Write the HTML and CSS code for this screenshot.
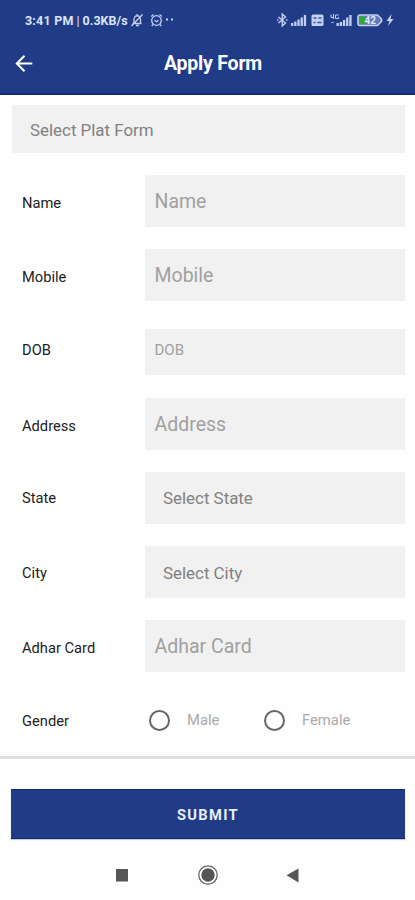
FILE: index.html
```html
<!DOCTYPE html>
<html lang="en">
<head>
<meta charset="utf-8">
<title>Apply Form</title>
<link rel="stylesheet" href="styles.css">
</head>
<body>
<header class="header">
  <div class="status">
    <span class="clock">3:41 PM</span><span class="bar">|</span><span class="speed">0.3KB/s</span>
    <svg class="status-left" width="48" height="16" viewBox="0 0 48 16" fill="none" stroke="#c3d0f2" stroke-width="1.3">
      <path d="M3.5 11.5h9M5 11V7.500a3.200 3.700 0 0 1 6.500 0V11M7 13.500h3M2.500 14 13.500 2.500M8.200 2v2"/>
      <circle cx="27.500" cy="8.500" r="4.800"/><path d="m22.200 4.500 2.300-2M32.800 4.500l-2.300-2M25.500 8.200l2 1.500 2-1.500M24 12.500l-1.200 1.500M31 12.500l1.200 1.500"/>
      <path d="M37 7.500h2M42 7.500h2" stroke-width="2"/>
    </svg>
    <svg class="status-right" width="122" height="16" viewBox="0 0 122 16" fill="#c3d0f2">
      <path d="m2.500 5 7 6-3.200 3V2l3.200 3-7 6M1 8h1.500M10 8h1.500" fill="none" stroke="#c3d0f2" stroke-width="1.400"/>
      <path d="M15 11h2.300v3H15zM18.200 9.500h2.300V14h-2.300zM21.400 7.500h2.300V14h-2.300zM24.600 5.500h2.300V14h-2.300zM27.800 3h2.300v11h-2.300z"/>
      <rect x="35.500" y="2.500" width="12" height="11.500" rx="1.500"/>
      <path d="M37.500 6h3M42.500 6h3M37.500 10.500h2M41.500 10.500h4" stroke="#36519a" stroke-width="1.300"/>
      <path d="M55 2.500v3h3M57.500 2v5M62.500 3h-3v3.500h3V5M55.500 10.500h2" fill="none" stroke="#c3d0f2"/>
      <path d="M60.500 11h2.300v3h-2.300zM63.700 10H66v4h-2.300zM66.900 8h2.300v6h-2.300zM70.100 5.500h2.300V14h-2.300zM73.300 3h2.300v11h-2.300z"/>
      <path d="M84 3h17.500l4 4v2.500l-4 4H84q-2 0-2-2V5q0-2 2-2z" fill="#6078b3" stroke="#c3d0f2" stroke-width="1.600"/>
      <path d="M83.500 4.500H90V12h-6.500z" fill="#35a833"/>
      <text x="88.500" y="11.800" class="battery">42</text>
      <path d="m115.500 2-5 7h3l-1.500 5 5.500-7h-3z"/>
    </svg>
  </div>
  <div class="appbar">
    <svg class="back" width="20" height="20" viewBox="0 0 20 20" fill="none" stroke="#fff" stroke-width="2"><path d="M18.300 9.500H3M10.500 1.800 2.800 9.500l7.700 7.700"/></svg>
    <h1>Apply Form</h1>
  </div>
</header>
<main class="form">
  <div class="field platform select">Select Plat Form</div>
  <div class="row"><label>Name</label><div class="field large">Name</div></div>
  <div class="row"><label>Mobile</label><div class="field large">Mobile</div></div>
  <div class="row dob"><label>DOB</label><div class="field small">DOB</div></div>
  <div class="row"><label>Address</label><div class="field large">Address</div></div>
  <div class="row state"><label>State</label><div class="field select">Select State</div></div>
  <div class="row city"><label>City</label><div class="field select">Select City</div></div>
  <div class="row adhar"><label>Adhar Card</label><div class="field large">Adhar Card</div></div>
  <div class="row gender"><label>Gender</label>
    <div class="options"><span class="option"><i class="radio"></i>Male</span><span class="option female"><i class="radio"></i>Female</span></div>
  </div>
</main>
<footer class="footer">
  <button class="submit">SUBMIT</button>
  <nav class="nav">
    <svg width="208" height="24" viewBox="0 0 208 24" fill="#555">
      <path d="M12 6h12v12.500H12z"/>
      <circle cx="104" cy="12" r="9.200" fill="none" stroke="#666" stroke-width="1.300"/><circle cx="104" cy="12" r="6.700"/>
      <path d="M182.500 12.300 194.500 5.500v14z"/>
    </svg>
  </nav>
</footer>
</body>
</html>
```
FILE: styles.css
```css
* { box-sizing: border-box; }
body { margin: 0; height: 900px; overflow: hidden; background: #fefefe; font-family: Roboto, sans-serif; }
.header { height: 95px; background: #213c86; border-bottom: 2px solid #0c2c78; color: #fff; }
.status { height: 40px; padding: 0 17px 0 25px; display: flex; align-items: center; color: #dce4fb; font-size: 12.5px; font-weight: 700; }
.clock { letter-spacing: .2px; }
.bar { margin: 0 3px; font-weight: 400; }
.status-left { margin-left: 1.5px; }
.status-right { margin-left: auto; }
.battery { font: 700 10px Roboto, sans-serif; fill: #e0e7fa; }
.appbar { height: 47px; padding-left: 14px; display: grid; grid-template-columns: 20px 1fr; align-items: center; }
.appbar h1 { margin: 0; padding-right: 23px; text-align: center; font-size: 19.5px; line-height: 24px; letter-spacing: -.2px; }
.form { height: 664px; padding: 10px 10px 0 11.5px; border-bottom: 3px solid #dedede; }
.field { height: 52px; padding-left: 10px; display: flex; align-items: center; background: #f1f1f1; color: #a0a0a0; }
.platform { height: 48px; }
.select { padding-left: 18.5px; font-size: 16.9px; color: #818181; }
.platform { padding-top: 2px; }
.large { font-size: 19.5px; padding-top: 1px; }
.small { height: 46px; font-size: 15px; padding-bottom: 4px; }
.row { margin-top: 22px; display: grid; grid-template-columns: 133px 1fr; align-items: center; }
.row label { padding: 4px 0 0 10.5px; font-size: 14.7px; color: #222; }
.city .field { padding-top: 2px; }
.dob { margin-top: 28px; }
.dob label { padding: 0 0 4px 10.5px; }
.state label { padding-top: 0; }
.city label { padding-top: 2px; }
.dob + .row { margin-top: 23px; }
.gender { height: 52px; }
.gender label { padding-top: 2px; }
.options { display: flex; align-items: center; padding-left: 4px; font-size: 14.8px; color: #aaa; }
.option { width: 115px; display: flex; align-items: center; gap: 17.5px; line-height: 22px; }
.radio { width: 21px; height: 21px; border: 2px solid #666; border-radius: 50%; }
.footer { padding: 30px 10px 0 11px; }
.submit { display: block; width: 100%; height: 50px; border: 0; border-top: 1px solid #0c2c78; border-bottom: 1px solid #0c2c78; background: #213c86; box-shadow: 0 1px 1px #ccc; color: #e8eefc; font: 700 14.7px Roboto, sans-serif; letter-spacing: 1.3px; padding-top: 3px; }
.nav { display: flex; justify-content: center; margin-top: 24px; }
```
